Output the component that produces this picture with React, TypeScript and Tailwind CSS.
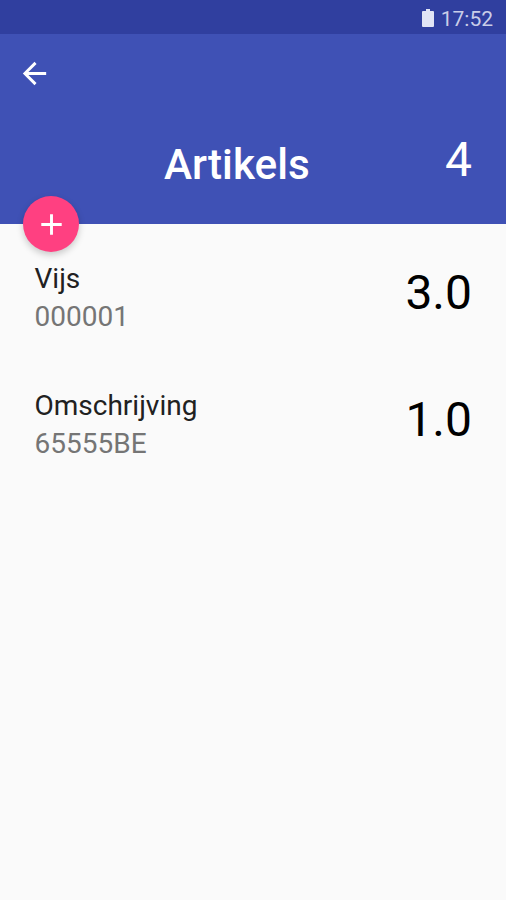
import React from 'react';

interface Article {
  name: string;
  code: string;
  amount: string;
}

const articles: Article[] = [
  { name: 'Vijs', code: '000001', amount: '3.0' },
  { name: 'Omschrijving', code: '65555BE', amount: '1.0' },
];

const StatusBar = () => (
  <div className="flex h-[34px] items-center justify-end bg-[#303f9f] pr-[13px] pt-[3px] text-[#c9cde8]">
    <svg className="mb-[2px] mr-[7px] h-[18px] w-[12px]" viewBox="0 0 12 18" fill="#e1e4f5">
      <path d="M4 0h4v2h3a1 1 0 0 1 1 1v14a1 1 0 0 1-1 1H1a1 1 0 0 1-1-1V3a1 1 0 0 1 1-1h3z" />
    </svg>
    <span className="pt-px text-[21px] leading-none">17:52</span>
  </div>
);

const ArticleRow = ({ article }: { article: Article }) => (
  <div className="flex h-[126.5px] justify-between pl-[34.5px] pr-[34px] pt-[36px]">
    <div>
      <div className="text-[28px] leading-[38px] text-[#212121]">{article.name}</div>
      <div className="text-[28px] leading-[38px] text-[#757575]">{article.code}</div>
    </div>
    <div className="pt-[5px] text-[48px] leading-[56px] text-black">{article.amount}</div>
  </div>
);

export default function App() {
  return (
    <div className="h-[900px] w-[506px] overflow-hidden bg-[#fafafa] font-['Roboto',sans-serif]">
      <StatusBar />

      {/* Header */}
      <header className="relative h-[190px] bg-[#3f51b5] text-white">
        <button className="block pl-[17px] pt-[22px]" aria-label="Terug">
          <svg className="h-[35px] w-[35px]" viewBox="0 0 24 24" fill="currentColor">
            <path d="M20 11H7.83l5.59-5.59L12 4l-8 8 8 8 1.41-1.41L7.83 13H20v-2z" />
          </svg>
        </button>
        <div className="flex justify-between pl-[164px] pr-[34px] pt-[41px]">
          <h1 className="pt-[5px] text-[42.3px] font-medium leading-[56px]">Artikels</h1>
          <span className="text-[48px] leading-[56px]">4</span>
        </div>

        {/* Add button */}
        <button
          className="absolute bottom-[-28px] left-[23px] flex h-[56px] w-[56px] items-center justify-center rounded-full bg-[#ff4081] shadow-[0_3px_7px_rgba(0,0,0,0.2)]"
          aria-label="Toevoegen"
        >
          <svg className="h-[35px] w-[35px]" viewBox="0 0 24 24" fill="currentColor">
            <path d="M19 13h-6v6h-2v-6H5v-2h6V5h2v6h6v2z" />
          </svg>
        </button>
      </header>

      {/* Articles */}
      <main>
        {articles.map((article) => (
          <ArticleRow key={article.code} article={article} />
        ))}
      </main>
    </div>
  );
}
